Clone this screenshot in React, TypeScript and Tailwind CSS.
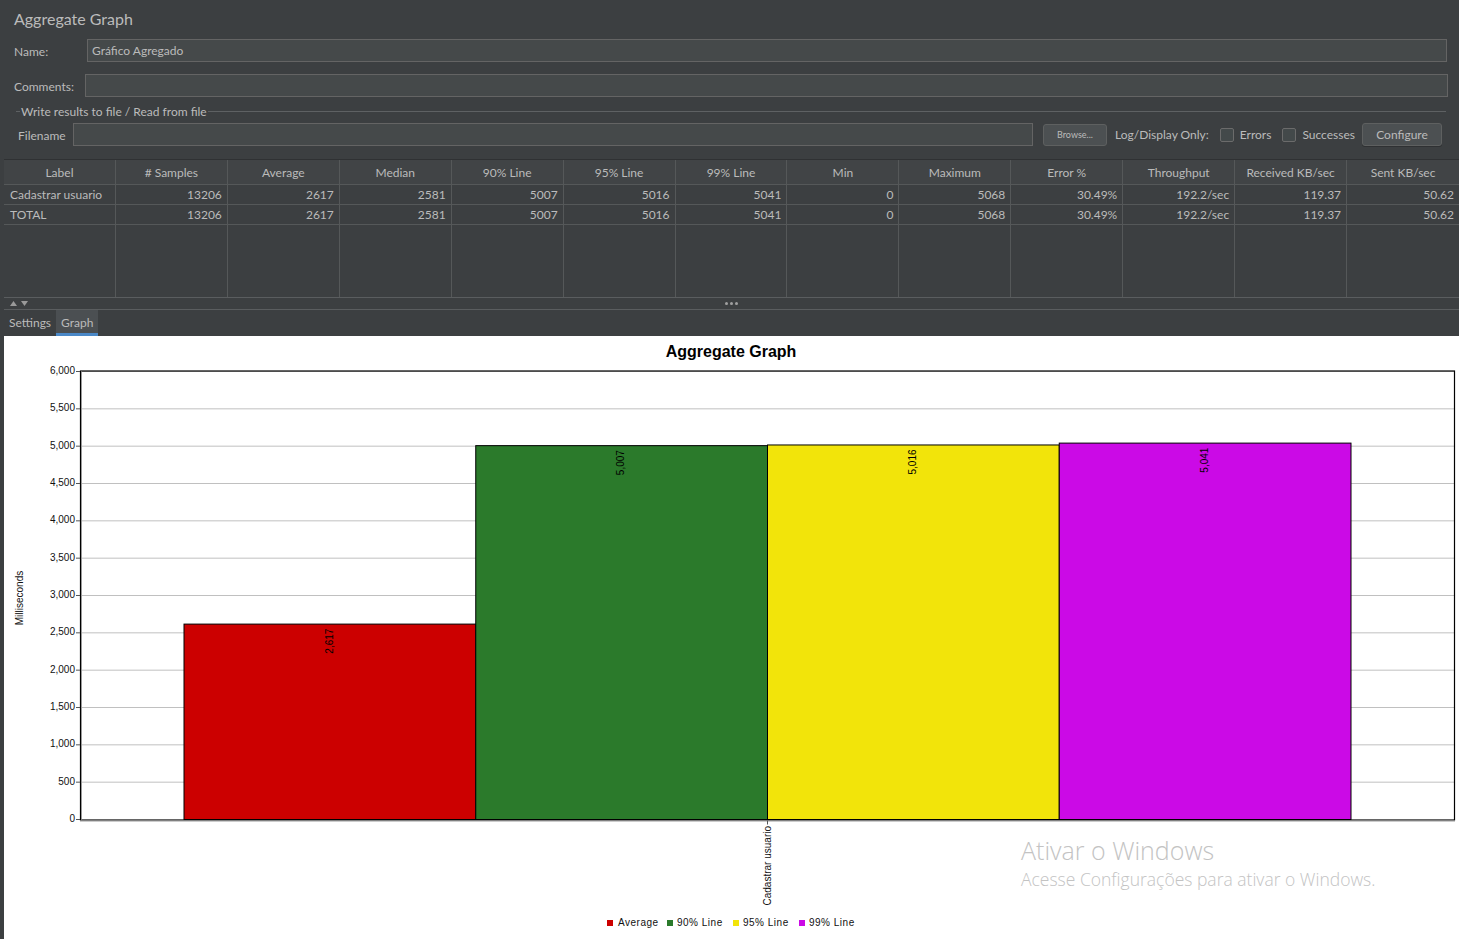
import React from "react"

const columns = [
  "Label",
  "# Samples",
  "Average",
  "Median",
  "90% Line",
  "95% Line",
  "99% Line",
  "Min",
  "Maximum",
  "Error %",
  "Throughput",
  "Received KB/sec",
  "Sent KB/sec",
]

const stats = ["13206", "2617", "2581", "5007", "5016", "5041", "0", "5068", "30.49%", "192.2/sec", "119.37", "50.62"]

const rows = [
  ["Cadastrar usuario", ...stats],
  ["TOTAL", ...stats],
]

function Checkbox({ label }: { label: string }) {
  return (
    <div className="flex items-center gap-[6px]">
      <span className="w-[14px] h-[14px] rounded-[2px] border border-[#6b6b6b] bg-[#43494a]" />
      <span className="pt-[1px]">{label}</span>
    </div>
  )
}

function Chart() {
  const L = 76
  const R = 1451
  const T = 35.5
  const B = 483.5
  const y = (v: number) => B - (v * (B - T)) / 6000
  const ticks = Array.from({ length: 13 }, (_, i) => i * 500)
  const bw = 291.75
  const bars = [
    { v: 2617, x: 180, color: "#cc0000" },
    { v: 5007, x: 180 + bw, color: "#2b7a2b" },
    { v: 5016, x: 180 + bw * 2, color: "#f2e40a" },
    { v: 5041, x: 180 + bw * 3, color: "#cb0ae6" },
  ]
  const legend = [
    { label: "Average", color: "#cc0000", sx: 603, tx: 614 },
    { label: "90% Line", color: "#2b7a2b", sx: 663, tx: 673 },
    { label: "95% Line", color: "#f2e40a", sx: 729, tx: 739 },
    { label: "99% Line", color: "#cb0ae6", sx: 795, tx: 805 },
  ]

  return (
    <svg width="1455" height="603" viewBox="0 0 1455 603" fontFamily="'Liberation Sans', Arial, sans-serif">
      <text x="727" y="21" textAnchor="middle" fontSize="16" fontWeight="bold" fill="#000">
        Aggregate Graph
      </text>

      {/* grid */}
      {ticks.slice(1).map((t) => (
        <line key={t} x1={L} x2={R} y1={y(t)} y2={y(t)} stroke="#c0c0c0" strokeWidth="1" />
      ))}

      {/* bars */}
      {bars.map((b) => (
        <g key={b.v}>
          <rect x={b.x} y={y(b.v)} width={bw} height={B - y(b.v)} fill={b.color} stroke="#000" strokeWidth="1" />
          <text
            transform={`translate(${b.x + bw / 2} ${y(b.v) + 4.5}) rotate(-90)`}
            textAnchor="end"
            dominantBaseline="middle"
            fontSize="10"
            fill="#000"
          >
            {b.v.toLocaleString("en-US")}
          </text>
        </g>
      ))}

      {/* plot border */}
      <rect x={L + 0.5} y={T - 0.5} width={R - L - 1} height={B - T + 1} fill="none" stroke="#000" strokeWidth="1.2" />
      <line x1={L + 1.5} x2={L + 1.5} y1={T} y2={B} stroke="#9a9a9a" strokeWidth="1" />
      <line x1={L} x2={R} y1={B + 1.5} y2={B + 1.5} stroke="#9a9a9a" strokeWidth="1" />

      {/* y ticks */}
      {ticks.map((t) => (
        <g key={t}>
          <line x1={L - 4} x2={L} y1={y(t)} y2={y(t)} stroke="#555" strokeWidth="1" />
          <text x={L - 5} y={y(t)} textAnchor="end" dominantBaseline="middle" fontSize="10" fill="#111">
            {t.toLocaleString("en-US")}
          </text>
        </g>
      ))}

      <text transform="translate(16 262) rotate(-90)" textAnchor="middle" dominantBaseline="middle" fontSize="10" fill="#111">
        Milliseconds
      </text>

      {/* category */}
      <line x1="763.5" x2="763.5" y1={B + 1} y2={B + 5} stroke="#555" strokeWidth="1" />
      <text
        transform="translate(764 490) rotate(-90)"
        textAnchor="end"
        dominantBaseline="middle"
        fontSize="10"
        fill="#111"
      >
        Cadastrar usuario
      </text>

      {/* legend */}
      {legend.map((l) => (
        <g key={l.label}>
          <rect x={l.sx} y="584" width="6" height="6" fill={l.color} />
          <text x={l.tx} y="590" fontSize="10" letterSpacing="0.5" fill="#111">
            {l.label}
          </text>
        </g>
      ))}
    </svg>
  )
}

export default function App() {
  return (
    <div className="w-[1459px] h-[939px] overflow-hidden bg-[#3c3f41] text-[#bbbbbb] text-[12px] pl-[4px] flex flex-col font-['Lato','Noto_Sans',sans-serif]">
      {/* Header form */}
      <div className="h-[39px] flex items-center pl-[10px] pb-[2px] text-[16px]">Aggregate Graph</div>

      <div className="h-[23px] flex items-center pr-[12px]">
        <span className="w-[83px] pl-[10px] pt-[2px]">Name:</span>
        <div className="flex-1 h-full flex items-center bg-[#45494a] border border-[#646464] px-[4px] pt-[1px]">Gráfico Agregado</div>
      </div>

      <div className="h-[23px] mt-[12px] flex items-center pr-[11px]">
        <span className="w-[81px] pl-[10px] pt-[2px]">Comments:</span>
        <div className="flex-1 h-full bg-[#45494a] border border-[#646464]" />
      </div>

      <div className="h-[20px] mt-[4px] flex items-center pl-[12px] pr-[13px]">
        <span className="w-[4px] h-px bg-[#5e6163]" />
        <span className="px-[1px] pt-[2px]">Write results to file / Read from file</span>
        <span className="flex-1 h-px bg-[#5e6163]" />
      </div>

      <div className="h-[23px] mt-[2px] flex items-center pr-[17px]">
        <span className="w-[69px] pl-[14px] pt-[2px]">Filename</span>
        <div className="flex-1 h-full bg-[#45494a] border border-[#646464]" />
        <button className="ml-[10px] w-[64px] h-[22px] rounded-[3px] border border-[#5e6060] bg-[#4c5052] text-[9px] text-[#bbbbbb]">
          Browse...
        </button>
        <span className="ml-[8px] pt-[1px]">Log/Display Only:</span>
        <div className="ml-[11px]">
          <Checkbox label="Errors" />
        </div>
        <div className="ml-[11px]">
          <Checkbox label="Successes" />
        </div>
        <button className="ml-[7px] w-[80px] h-[23px] rounded-[3px] border border-[#5e6060] bg-[#4c5052] text-[12px] text-[#bbbbbb] pt-[1px] shadow-[0_1px_0_#2f3133]">
          Configure
        </button>
      </div>

      {/* Table */}
      <div className="mt-[13px] h-[138px] flex flex-col border-t border-[#2f3133]">
        <div className="h-[25px] grid grid-cols-[repeat(13,minmax(0,1fr))] bg-[#414446] border-b border-[#555859]">
          {columns.map((c) => (
            <div key={c} className="flex items-center justify-center pt-[2px] border-r border-[#555859] last:border-r-0">
              {c}
            </div>
          ))}
        </div>
        {rows.map((r) => (
          <div key={r[0]} className="h-[20px] grid grid-cols-[repeat(13,minmax(0,1fr))] border-b border-[#555859]">
            {r.map((cell, i) => (
              <div
                key={i}
                className={`flex items-center border-r border-[#555859] last:border-r-0 ${i === 0 ? "pl-[6px]" : "justify-end pr-[5px]"}`}
              >
                {cell}
              </div>
            ))}
          </div>
        ))}
        <div className="flex-1 grid grid-cols-[repeat(13,minmax(0,1fr))]">
          {columns.map((c) => (
            <div key={c} className="border-r border-[#555859] last:border-r-0" />
          ))}
        </div>
      </div>

      {/* Splitter */}
      <div className="h-[13px] relative border-t border-b border-[#5a5d5f]">
        <div className="absolute left-[6px] top-[3px] flex gap-[4px]">
          <svg width="7" height="5" viewBox="0 0 7 5">
            <path d="M0 5 L3.5 0 L7 5 Z" fill="#9a9a9a" />
          </svg>
          <svg width="7" height="5" viewBox="0 0 7 5">
            <path d="M0 0 L7 0 L3.5 5 Z" fill="#9a9a9a" />
          </svg>
        </div>
        <div className="absolute left-[721px] top-[4px] flex gap-[2px]">
          <span className="w-[3px] h-[3px] rounded-full bg-[#a0a0a0]" />
          <span className="w-[3px] h-[3px] rounded-full bg-[#a0a0a0]" />
          <span className="w-[3px] h-[3px] rounded-full bg-[#a0a0a0]" />
        </div>
      </div>

      {/* Tabs */}
      <div className="h-[26px] flex items-stretch">
        <div className="px-[5px] flex items-center">Settings</div>
        <div className="px-[5px] flex items-center bg-[#4b4f52] border-b-[3px] border-[#4a88c7] pt-[3px]">Graph</div>
      </div>

      {/* Graph panel */}
      <div className="h-[603px] bg-white relative">
        <Chart />
        <div className="absolute left-[1017px] top-[497px] flex flex-col font-['Open_Sans','Noto_Sans',sans-serif] text-[#c3c3c3]">
          <span className="text-[25px] leading-[34px] font-light">Ativar o Windows</span>
          <span className="text-[17.5px] leading-[24px] font-light">Acesse Configurações para ativar o Windows.</span>
        </div>
      </div>
    </div>
  )
}
